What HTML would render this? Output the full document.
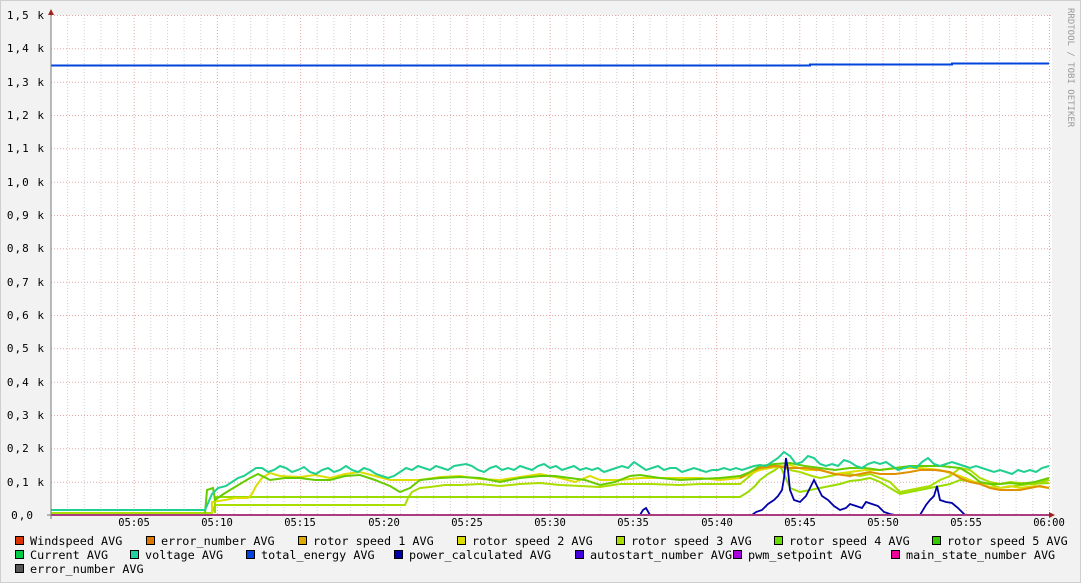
<!DOCTYPE html>
<html><head><meta charset="utf-8"><style>
html,body{margin:0;padding:0;background:#f2f2f2}
svg{display:block}
text{font-family:"DejaVu Sans Mono","Liberation Mono",monospace;font-size:10.5px;fill:#000}
.yl text{font-size:11px;letter-spacing:1px}
.lg text{font-size:11.8px}
text.wm{font-size:9px;fill:#999}
</style></head><body>
<svg width="1081" height="583" viewBox="0 0 1081 583" xmlns="http://www.w3.org/2000/svg">
<rect x="0.5" y="0.5" width="1080" height="582" fill="#f2f2f2" stroke="#cfcfcf"/>
<rect x="51" y="15" width="1001" height="500" fill="#fff"/>
<g stroke="#d0d0d0" stroke-dasharray="1,2" stroke-width="1">
<path d="M67.6 15V515M84.3 15V515M100.9 15V515M117.6 15V515M150.8 15V515M167.5 15V515M184.1 15V515M200.8 15V515M234 15V515M250.7 15V515M267.3 15V515M284 15V515M317.2 15V515M333.9 15V515M350.5 15V515M367.2 15V515M400.4 15V515M417.1 15V515M433.7 15V515M450.4 15V515M483.6 15V515M500.3 15V515M516.9 15V515M533.6 15V515M566.8 15V515M583.5 15V515M600.1 15V515M616.8 15V515M650 15V515M666.7 15V515M683.3 15V515M700 15V515M733.2 15V515M749.9 15V515M766.5 15V515M783.2 15V515M816.4 15V515M833.1 15V515M849.7 15V515M866.4 15V515M899.6 15V515M916.3 15V515M932.9 15V515M949.6 15V515M982.8 15V515M999.5 15V515M1016.1 15V515M1032.8 15V515"/>
</g>
<g stroke="#e8a8a8" stroke-dasharray="1,2" stroke-width="1">
<path d="M134.2 15V515M217.4 15V515M300.6 15V515M383.8 15V515M467 15V515M550.2 15V515M633.4 15V515M716.6 15V515M799.8 15V515M883 15V515M966.2 15V515M1049.5 15V515"/>
<path d="M51 15.5H1052M51 48.8H1052M51 82.2H1052M51 115.5H1052M51 148.8H1052M51 182.2H1052M51 215.5H1052M51 248.8H1052M51 282.2H1052M51 315.5H1052M51 348.8H1052M51 382.2H1052M51 415.5H1052M51 448.8H1052M51 482.2H1052"/>
</g>
<g fill="none" stroke-width="2" stroke-linejoin="miter">
<polyline stroke="#0044dd" points="51,65.5 810,65.5 810,64.5 952,64.5 952,63.5 1049,63.5"/>
<polyline stroke="#aadd00" points="51,513 212,513 215,505 405,505 408,498 412,492 420,488 430,487 445,485 460,485 480,484 500,486 520,484 540,483 560,485 580,486 600,487 620,484 650,484 680,485 700,484 740,484 745,480 752,474 760,468 770,466 780,466 790,470 800,472 812,476 820,478 830,476 845,473 860,476 870,474 880,478 890,482 900,492 910,490 920,488 930,486 940,480 950,476 960,468 970,470 980,478 990,482 1000,484 1010,482 1020,483 1035,484 1049,480"/>
<polyline stroke="#99dd00" points="215,513 215,497 740,497 748,492 755,486 760,480 768,474 775,470 780,466 785,476 790,488 800,492 810,490 820,488 830,486 840,484 850,481 860,480 870,478 880,482 890,488 900,494 910,492 920,490 930,488 940,486 950,484 960,480 975,482 990,484 1000,488 1015,486 1030,484 1049,483"/>
<polyline stroke="#dddd00" points="212,513 212,502 225,500 235,498 248,498 252,494 256,486 262,478 270,473 280,476 300,477 315,475 330,478 345,474 360,472 375,476 390,480 400,480 420,480 440,477 460,476 480,479 500,480 520,477 540,474 560,478 575,482 590,476 600,480 620,480 640,478 660,478 680,478 700,478 720,480 740,478 750,474 760,470 770,468 790,465 805,470 820,470 835,474 850,472 865,470 880,470 900,468 920,468 940,470 960,476 970,480 980,484 990,487 1000,488 1010,486 1020,488 1035,486 1049,488"/>
<polyline stroke="#e09000" points="740,478 750,472 760,468 775,466 790,468 805,468 820,470 835,474 850,476 860,474 870,472 880,474 895,474 910,472 920,470 935,470 950,472 960,478 970,482 980,484 990,488 1000,490 1010,490 1020,490 1030,488 1040,486 1049,488"/>
<polyline stroke="#66cc00" points="205,513 207,490 213,488 215,500 222,495 230,490 240,484 250,478 258,474 262,476 270,480 285,478 300,478 315,480 330,480 345,476 360,475 375,480 390,486 400,492 410,488 420,480 440,478 460,477 480,478 500,482 520,478 540,476 555,476 570,478 585,480 600,485 615,482 630,476 640,475 660,478 680,480 700,479 720,478 740,476 750,472 760,466 775,464 790,463 805,466 820,468 835,470 850,468 865,468 880,470 895,468 910,466 925,466 940,466 960,468 970,474 980,482 990,484 1000,484 1010,483 1020,484 1035,482 1049,478"/>
<polyline stroke="#20d090" points="51,510 205,510 212,494 218,488 226,486 232,482 238,478 244,476 250,472 256,468 262,468 268,472 274,470 280,466 286,468 292,472 298,470 304,467 310,472 316,474 322,470 328,468 334,472 340,470 346,466 352,470 358,472 364,468 370,470 376,474 382,476 388,478 394,476 400,472 406,468 412,470 418,466 424,468 430,470 436,466 442,468 448,470 454,466 460,465 466,464 472,466 478,470 484,472 490,468 496,466 502,470 508,468 514,470 520,466 526,468 532,470 538,466 544,464 550,468 556,466 562,470 568,468 574,466 580,470 586,468 592,470 598,468 604,472 610,470 616,468 622,466 628,468 634,462 640,466 646,470 652,468 658,466 664,470 670,468 676,468 682,472 688,470 694,468 700,470 706,472 712,470 718,470 724,468 730,470 736,468 742,470 748,468 754,466 760,465 766,466 772,462 778,458 784,452 790,456 796,464 802,462 808,456 814,458 820,464 826,466 832,464 838,466 844,460 850,462 856,466 862,468 868,464 874,462 880,464 886,462 892,466 898,470 904,468 910,466 916,468 922,462 928,458 934,464 940,466 946,464 952,462 958,464 964,466 970,468 976,466 982,468 988,470 994,472 1000,470 1006,472 1012,474 1018,470 1024,472 1030,470 1036,472 1042,468 1049,466"/>
<polyline stroke="#0000aa" stroke-width="1.8" points="51,515 640,515 643,510 646,508 650,515 740,515 752,515 756,512 762,510 768,504 774,500 778,496 782,490 784,478 786,458 788,470 790,490 794,500 800,502 806,496 810,488 814,480 818,488 822,496 828,500 834,506 840,510 846,508 850,504 856,506 862,508 866,502 872,504 878,506 884,512 890,514 895,515 920,515 926,505 930,500 934,496 937,486 940,500 946,502 952,503 958,508 962,512 965,515 1049,515"/>
<polyline stroke="#e0008a" points="51,515 1049,515"/>
</g>
<path d="M51 15V519M47 515H1052" stroke="#777" stroke-width="1"/>
<path d="M51 9l-3 6h6z M1055 515l-6-3v6z" fill="#a02020"/>
<g text-anchor="end" class="yl">
<text x="45" y="19">1,5 k</text><text x="45" y="52">1,4 k</text><text x="45" y="86">1,3 k</text><text x="45" y="119">1,2 k</text><text x="45" y="152">1,1 k</text><text x="45" y="186">1,0 k</text><text x="45" y="219">0,9 k</text><text x="45" y="252">0,8 k</text><text x="45" y="286">0,7 k</text><text x="45" y="319">0,6 k</text><text x="45" y="352">0,5 k</text><text x="45" y="386">0,4 k</text><text x="45" y="419">0,3 k</text><text x="45" y="452">0,2 k</text><text x="45" y="486">0,1 k</text><text x="34" y="519">0,0</text>
</g>
<g text-anchor="middle">
<text x="134" y="526">05:05</text><text x="217" y="526">05:10</text><text x="300" y="526">05:15</text><text x="384" y="526">05:20</text><text x="467" y="526">05:25</text><text x="550" y="526">05:30</text><text x="633" y="526">05:35</text><text x="717" y="526">05:40</text><text x="800" y="526">05:45</text><text x="883" y="526">05:50</text><text x="966" y="526">05:55</text><text x="1049" y="526">06:00</text>
</g>
<text class="wm" x="1068" y="8" transform="rotate(90 1068 8)">RRDTOOL / TOBI OETIKER</text>
<g stroke="#000" stroke-width="1">
<rect x="15.5" y="536.5" width="8" height="8" fill="#dd3300"/><rect x="146.5" y="536.5" width="8" height="8" fill="#dd7700"/><rect x="298.5" y="536.5" width="8" height="8" fill="#ddaa00"/><rect x="457.5" y="536.5" width="8" height="8" fill="#dddd00"/><rect x="616.5" y="536.5" width="8" height="8" fill="#aadd00"/><rect x="774.5" y="536.5" width="8" height="8" fill="#66dd00"/><rect x="932.5" y="536.5" width="8" height="8" fill="#33cc00"/>
<rect x="15.5" y="550.5" width="8" height="8" fill="#00cc44"/><rect x="130.5" y="550.5" width="8" height="8" fill="#20d0a0"/><rect x="246.5" y="550.5" width="8" height="8" fill="#0044dd"/><rect x="394.5" y="550.5" width="8" height="8" fill="#0000aa"/><rect x="575.5" y="550.5" width="8" height="8" fill="#4400dd"/><rect x="733.5" y="550.5" width="8" height="8" fill="#aa00dd"/><rect x="891.5" y="550.5" width="8" height="8" fill="#ee0099"/>
<rect x="15.5" y="564.5" width="8" height="8" fill="#555"/>
</g>
<g class="lg">
<text x="30" y="545">Windspeed AVG</text><text x="161" y="545">error_number AVG</text><text x="313" y="545">rotor speed 1 AVG</text><text x="472" y="545">rotor speed 2 AVG</text><text x="631" y="545">rotor speed 3 AVG</text><text x="789" y="545">rotor speed 4 AVG</text><text x="947" y="545">rotor speed 5 AVG</text>
<text x="30" y="559">Current AVG</text><text x="145" y="559">voltage AVG</text><text x="261" y="559">total_energy AVG</text><text x="409" y="559">power_calculated AVG</text><text x="590" y="559">autostart_number AVG</text><text x="748" y="559">pwm_setpoint AVG</text><text x="906" y="559">main_state_number AVG</text>
<text x="30" y="573">error_number AVG</text>
</g>
</svg>
</body></html>
